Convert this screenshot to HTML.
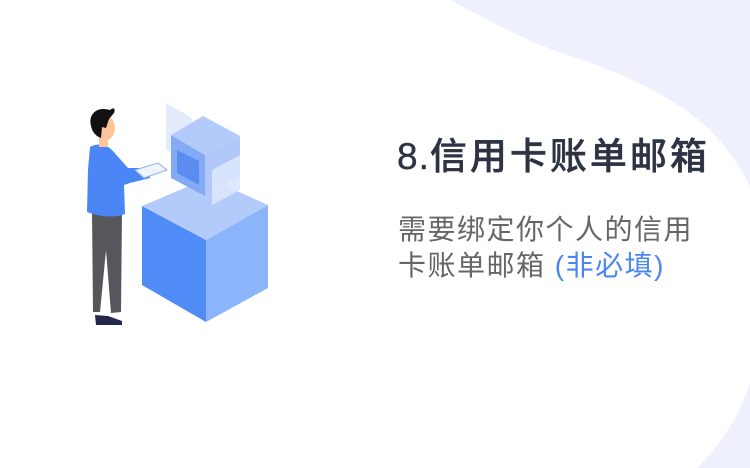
<!DOCTYPE html>
<html><head><meta charset="utf-8"><style>
html,body{margin:0;padding:0;background:#fff}
body{width:750px;height:468px;position:relative;overflow:hidden;font-family:"Liberation Sans","Noto Sans CJK SC",sans-serif}
svg{position:absolute;left:0;top:0}
.t{position:absolute;left:397px;top:133px;font-size:37px;font-weight:500;color:#2e3344;letter-spacing:3px;white-space:nowrap;line-height:48px;-webkit-text-stroke:0.4px #2e3344}
.t b{letter-spacing:1px;font-weight:normal}
.s{position:absolute;left:398px;top:212px;font-size:28px;color:#666;letter-spacing:1.5px;line-height:36px;white-space:nowrap}
.s span{color:#4a86f5}
</style></head><body>
<svg width="750" height="468" viewBox="0 0 750 468">
<path d="M450 0 C480 15 520 40 573 57 C620 72 670 95 705 125 C725 145 740 165 750 187 L750 0 Z" fill="#eef0fd"/>
<path d="M750 383 C742 410 725 440 697 468 L750 468 Z" fill="#eef0fd"/>
<polygon points="142,206 206,240 206,322 142,285" fill="#4f8cf7"/>
<polygon points="206,240 268,205 268,288 206,322" fill="#8cb4fb"/>
<polygon points="142,206 208,178 268,205 206,240" fill="#b3cbfb"/>
<polygon points="166,103 192,118 192,160 166,150" fill="#e4ebfd"/>
<polygon points="171,135 205,155 205,196 171,178" fill="#84a9f5"/>
<polygon points="177,150 199,161 199,185 177,173" fill="#5b8df0"/>
<polygon points="205,155 240,136 240,176 205,196" fill="#b0c7f8"/>
<polygon points="171,135 203,116 240,136 205,155" fill="#b3cbfb"/>
<polygon points="212,170 240,155 240,190 212,205" fill="#dbe6fd" opacity="0.9"/>
<polygon points="92,212 122,210 121,312 111,313 106,250 100,312 93,312" fill="#56565b"/>
<path d="M95 315 L108 316 L122 321 L122 325 L96 325 Z" fill="#24264a"/>
<path d="M90 147 C98 142 108 146 112 150 L128 168 L150 168 L150 178 L130 183 L124 185 L125 214 C115 218 100 217 87 212 L88 170 Z" fill="#4a86f5"/>
<polygon points="135,170 158,163 167,170 144,178" fill="#eef3fe" stroke="#8fb0f5" stroke-width="1"/>
<ellipse cx="106" cy="128" rx="9" ry="12" fill="#ffc49a"/>
<rect x="99" y="134" width="9" height="13" fill="#ffc49a"/>
<path d="M91 126 C88 114 97 106 110 110 C113 107 116 108 114 113 L109 119 L106 128 L102 127 L101 138 C95 136 92 131 91 126 Z" fill="#111"/>
</svg>
<div class="t"><b>8.</b>信用卡账单邮箱</div>
<div class="s">需要绑定你个人的信用<br>卡账单邮箱 <span>(非必填)</span></div>
</body></html>
